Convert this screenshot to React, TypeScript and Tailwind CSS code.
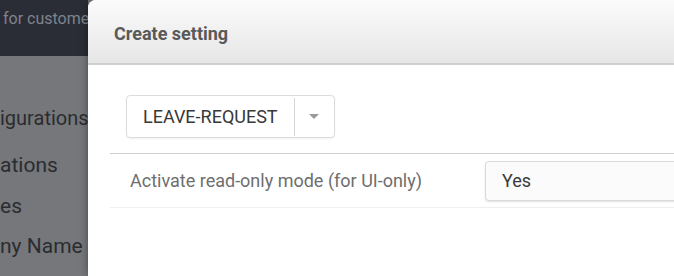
import React from "react";

const font = { fontFamily: "Roboto, 'Liberation Sans', sans-serif" };

const BehindPage = () => {
  return (
    <div className="w-[88px] shrink-0 overflow-hidden flex flex-col">
      <div className="h-[56px] bg-[#2a2d36] pt-[7px] pl-[3px]">
        <span className="whitespace-nowrap text-[16px] text-[#7f838c]">for custome</span>
      </div>
      <div className="flex-1 bg-[#75777b] text-[21px] text-[#2b2c2e] whitespace-nowrap">
        <div className="h-[40px] mt-[48px] leading-[28px] text-[20px]">igurations</div>
        <div className="h-[40px] mt-[4px] leading-[34px]">ations</div>
        <div className="h-[40px] leading-[36px]">es</div>
        <div className="h-[40px] leading-[36px]">ny Name</div>
      </div>
    </div>
  );
};

const CreateSettingModal = () => {
  return (
    <div className="w-[620px] shrink-0 bg-white rounded-tl-lg shadow-[0_0_8px_rgba(0,0,0,0.4)] overflow-hidden">
      {/* Header */}
      <div className="h-[65px] flex items-center pl-[26px] border-b-2 border-[#cfcfcf] bg-gradient-to-b from-[#fbfbfb] to-[#e6e6e6]">
        <h3 className="text-[18px] font-bold text-[#595959] pt-[4px]">Create setting</h3>
      </div>

      {/* Body */}
      <div className="pt-[30px]">
        <div className="ml-[38px] flex">
          <button className="h-[43px] flex items-center border border-[#dcdcdc] rounded-[4px] bg-white shadow-[0_1px_2px_rgba(0,0,0,0.06)]">
            <span className="pl-[16px] pr-[16px] text-[18px] text-[#383838]">LEAVE-REQUEST</span>
            <span className="h-[38px] border-l border-[#d5d5d5]" />
            <span className="w-[39px] flex items-center justify-center">
              <svg width="10" height="5" viewBox="0 0 10 5">
                <path d="M0 0 L10 0 L5 5 Z" fill="#9a9a9a" />
              </svg>
            </span>
          </button>
        </div>

        <div className="ml-[22px] mt-[15px] border-t border-[#cfcfcf]">
          <div className="flex items-center h-[54px] border-b border-[#efefef]">
            <div className="w-[375px] pl-[20px] text-[18px] text-[#6e6e6e]">
              Activate read-only mode (for UI-only)
            </div>
            <div className="flex-1 h-[40px] flex items-center pl-[16px] border border-[#dadada] rounded-[4px] bg-[#fbfbfb] shadow-[0_1px_2px_rgba(0,0,0,0.12)] text-[18px] text-[#3a3a3a]">
              Yes
            </div>
          </div>
        </div>
      </div>
    </div>
  );
};

export default function App() {
  return (
    <div className="w-[674px] h-[276px] overflow-hidden flex bg-[#75777b]" style={font}>
      <BehindPage />
      <CreateSettingModal />
    </div>
  );
}
